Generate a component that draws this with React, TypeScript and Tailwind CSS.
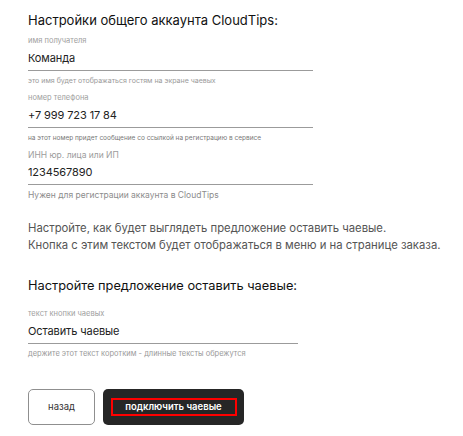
const font = { fontFamily: 'Inter, "Noto Sans", sans-serif' };

function Field({
  label,
  value,
  hint,
  width,
  labelClass = 'text-[7.5px] text-[#a0a0a0]',
  hintClass = 'text-[7px] text-[#8a8a8a]',
}: {
  label: string;
  value: string;
  hint: string;
  width: string;
  labelClass?: string;
  hintClass?: string;
}) {
  return (
    <div className={width}>
      <div className={`h-[14px] leading-[14px] whitespace-nowrap ${labelClass}`}>{label}</div>
      <div className="h-[23px] pt-[2px] border-b border-[#9b9b9b] text-[11px] leading-[16px] text-[#222] tracking-[-0.1px]">
        {value}
      </div>
      <div className={`h-[14px] leading-[14px] mt-[3px] whitespace-nowrap ${hintClass}`}>{hint}</div>
    </div>
  );
}

export default function App() {
  return (
    <div className="w-[463px] h-[436px] bg-white pl-[28px] pt-[11px]" style={font}>
      {/* Account settings */}
      <h1 className="text-[13px] leading-[18px] text-[#111] font-normal">
        Настройки общего аккаунта CloudTips:
      </h1>
      <div className="mt-[5px] space-y-[3px]">
        <Field
          width="w-[285px]"
          label="имя получателя"
          value="Команда"
          hint="это имя будет отображаться гостям на экране чаевых"
          hintClass="text-[7px] text-[#9a9a9a]"
        />
        <Field
          width="w-[285px]"
          label="номер телефона"
          value="+7 999 723 17 84"
          hint="на этот номер придет сообщение со ссылкой на регистрацию в сервисе"
          hintClass="text-[6.5px] text-[#777]"
        />
        <Field
          width="w-[285px]"
          label="ИНН юр. лица или ИП"
          value="1234567890"
          hint="Нужен для регистрации аккаунта в CloudTips"
          labelClass="text-[8.5px] text-[#9c9c9c]"
          hintClass="text-[8.5px] text-[#8c8c8c]"
        />
      </div>

      {/* Description */}
      <div className="mt-[18px] text-[11.3px] leading-[17px] text-[#555]">
        <p>Настройте, как будет выглядеть предложение оставить чаевые.</p>
        <p>Кнопка с этим текстом будет отображаться в меню и на странице заказа.</p>
      </div>

      {/* Tip button settings */}
      <h2 className="mt-[23px] text-[12.8px] leading-[18px] text-[#111] font-normal">
        Настройте предложение оставить чаевые:
      </h2>
      <div className="mt-[12px]">
        <Field
          width="w-[270px]"
          label="текст кнопки чаевых"
          value="Оставить чаевые"
          hint="держите этот текст коротким - длинные тексты обрежутся"
          labelClass="text-[7.5px] text-[#a0a0a0]"
          hintClass="text-[7.5px] text-[#9a9a9a]"
        />
      </div>

      {/* Actions */}
      <div className="mt-[28px] flex gap-[8px]">
        <button className="w-[67px] h-[36px] rounded-[5px] border border-[#8f8f8f] bg-white text-[9.5px] text-[#333]">
          назад
        </button>
        <button className="w-[141px] h-[36px] rounded-[5px] bg-[#262626] flex items-center justify-center">
          <span className="w-[126px] h-[18px] border-2 border-[#ff0000] text-white text-[9.5px] font-semibold leading-[14px] flex items-center justify-center">
            подключить чаевые
          </span>
        </button>
      </div>
    </div>
  );
}
